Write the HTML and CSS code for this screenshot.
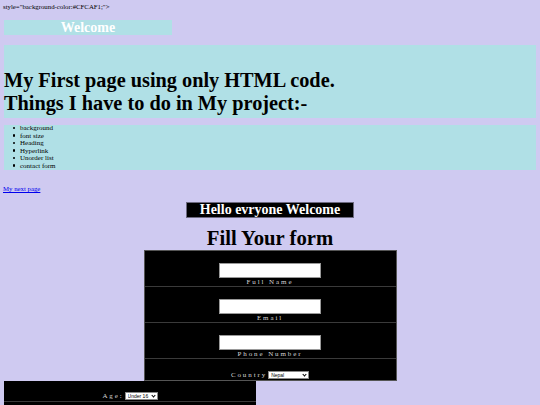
FILE: index.html
```html
<!DOCTYPE html>
<html>
<head>
<meta charset="utf-8">
<title>My First page</title>
<link rel="stylesheet" href="styles.css">
</head>
<body>
<p class="code">style="background-color:#CFCAF1;"&gt;</p>
<div class="welcome">Welcome</div>
<div class="intro">
  <h1 class="big">My First page using only HTML code.</h1>
  <h1 class="big">Things I have to do in My project:-</h1>
</div>
<ul class="todo">
  <li>background</li>
  <li>font size</li>
  <li>Heading</li>
  <li>Hyperlink</li>
  <li>Unorder list</li>
  <li>contact form</li>
</ul>
<a class="next" href="#">My next page</a>
<div class="hello">Hello evryone Welcome</div>
<h2 class="fill">Fill Your form</h2>
<div class="form">
  <div class="row"><input class="field" type="text"><div class="lbl">Full Name</div></div>
  <div class="row"><input class="field" type="text"><div class="lbl">Email</div></div>
  <div class="row"><input class="field" type="text"><div class="lbl">Phone Number</div></div>
  <div class="row short"><span class="lbl inline">Country</span><span class="selwrap country"><select class="sel"><option>Nepal</option></select></span></div>
</div>
<div class="form2">
  <div class="row age"><span class="lbl inline">Age:</span><span class="selwrap agesel"><select class="sel"><option>Under 16</option></select></span></div>
  <div class="row rest"></div>
</div>
</body>
</html>
```
FILE: styles.css
```css
html, body {
  margin: 0;
  padding: 0;
}
body {
  background-color: #CFCAF1;
  font-family: "Liberation Serif", "Times New Roman", serif;
  padding: 0 4px;
  overflow: hidden;
}
.code {
  margin: 0 0 0 -1px;
  padding-top: 2px;
  font-size: 6.8px;
  line-height: 9px;
  height: 9px;
}
.welcome {
  margin-top: 9px;
  width: 168px;
  height: 15px;
  line-height: 15px;
  background: #B0E0E6;
  color: #fff;
  font-weight: bold;
  font-size: 14px;
  text-align: center;
}
.intro {
  margin-top: 10px;
  background: #B0E0E6;
  padding: 24px 0 3px;
}
.big {
  margin: 0;
  font-size: 20.3px;
  line-height: 23px;
  font-weight: bold;
  color: #000;
}
.todo {
  margin: 7px 0 0;
  background: #B0E0E6;
  padding: 0 0 0 16px;
  font-size: 7px;
  line-height: 7.5px;
  list-style: none;
}
.todo li::before {
  content: "";
  display: inline-block;
  width: 2.4px;
  height: 2.4px;
  border-radius: 50%;
  background: #000;
  vertical-align: middle;
  margin-left: -7px;
  margin-right: 4.6px;
  position: relative;
  top: -0.5px;
}
.next {
  display: block;
  margin-top: 14px;
  margin-left: -1px;
  font-size: 6.8px;
  line-height: 9px;
  color: #0000EE;
}
.hello {
  margin: 9px auto 0;
  width: 166px;
  height: 14px;
  line-height: 14px;
  background: #000;
  border: 1px solid #6d6a80;
  color: #fff;
  font-weight: bold;
  font-size: 14px;
  text-align: center;
}
.fill {
  margin: 8px 0 0;
  font-size: 20.7px;
  line-height: 24px;
  text-align: center;
  font-weight: bold;
}
.form {
  margin: 0 auto;
  width: 251px;
  background: #000;
  border: 1px solid #555;
  border-bottom: none;
}
.row {
  text-align: center;
  border-bottom: 1px solid #3a3a3a;
  padding-top: 12px;
  height: 23px;
  font-size: 7px;
  line-height: 8px;
}
.row.short {
  height: 9px;
  padding-top: 12px;
  border-bottom: 1px solid #555;
}
.field {
  display: block;
  margin: 0 auto;
  box-sizing: border-box;
  width: 102px;
  height: 15px;
  border: 1px solid #999;
  background: #fff;
  padding: 0;
}
.lbl {
  color: #d6d6d6;
  font-size: 7px;
  line-height: 8px;
  letter-spacing: 1.9px;
}
.lbl.inline {
  display: inline-block;
  vertical-align: middle;
  margin-right: 1px;
}
.selwrap {
  display: inline-block;
  vertical-align: middle;
  position: relative;
  height: 8px;
}
.selwrap::after {
  content: "";
  position: absolute;
  right: 3px;
  top: 1.5px;
  width: 2px;
  height: 2px;
  border-right: 1px solid #000;
  border-bottom: 1px solid #000;
  transform: rotate(45deg);
  pointer-events: none;
}
.sel {
  -webkit-appearance: none;
  appearance: none;
  display: block;
  box-sizing: border-box;
  width: 100%;
  height: 8px;
  font-size: 5px;
  line-height: 6px;
  font-family: "Liberation Sans", Arial, sans-serif;
  padding: 0 0 0 2px;
  margin: 0;
  border: 1px solid #888;
  border-radius: 0;
  background: #fff;
  color: #000;
}
.country {
  width: 41px;
}
.form2 {
  width: 252px;
  background: #000;
}
.row.age {
  padding-top: 11px;
  height: 9px;
}
.agesel {
  width: 33px;
}
.row.rest {
  height: 20px;
  border-bottom: none;
}
```
